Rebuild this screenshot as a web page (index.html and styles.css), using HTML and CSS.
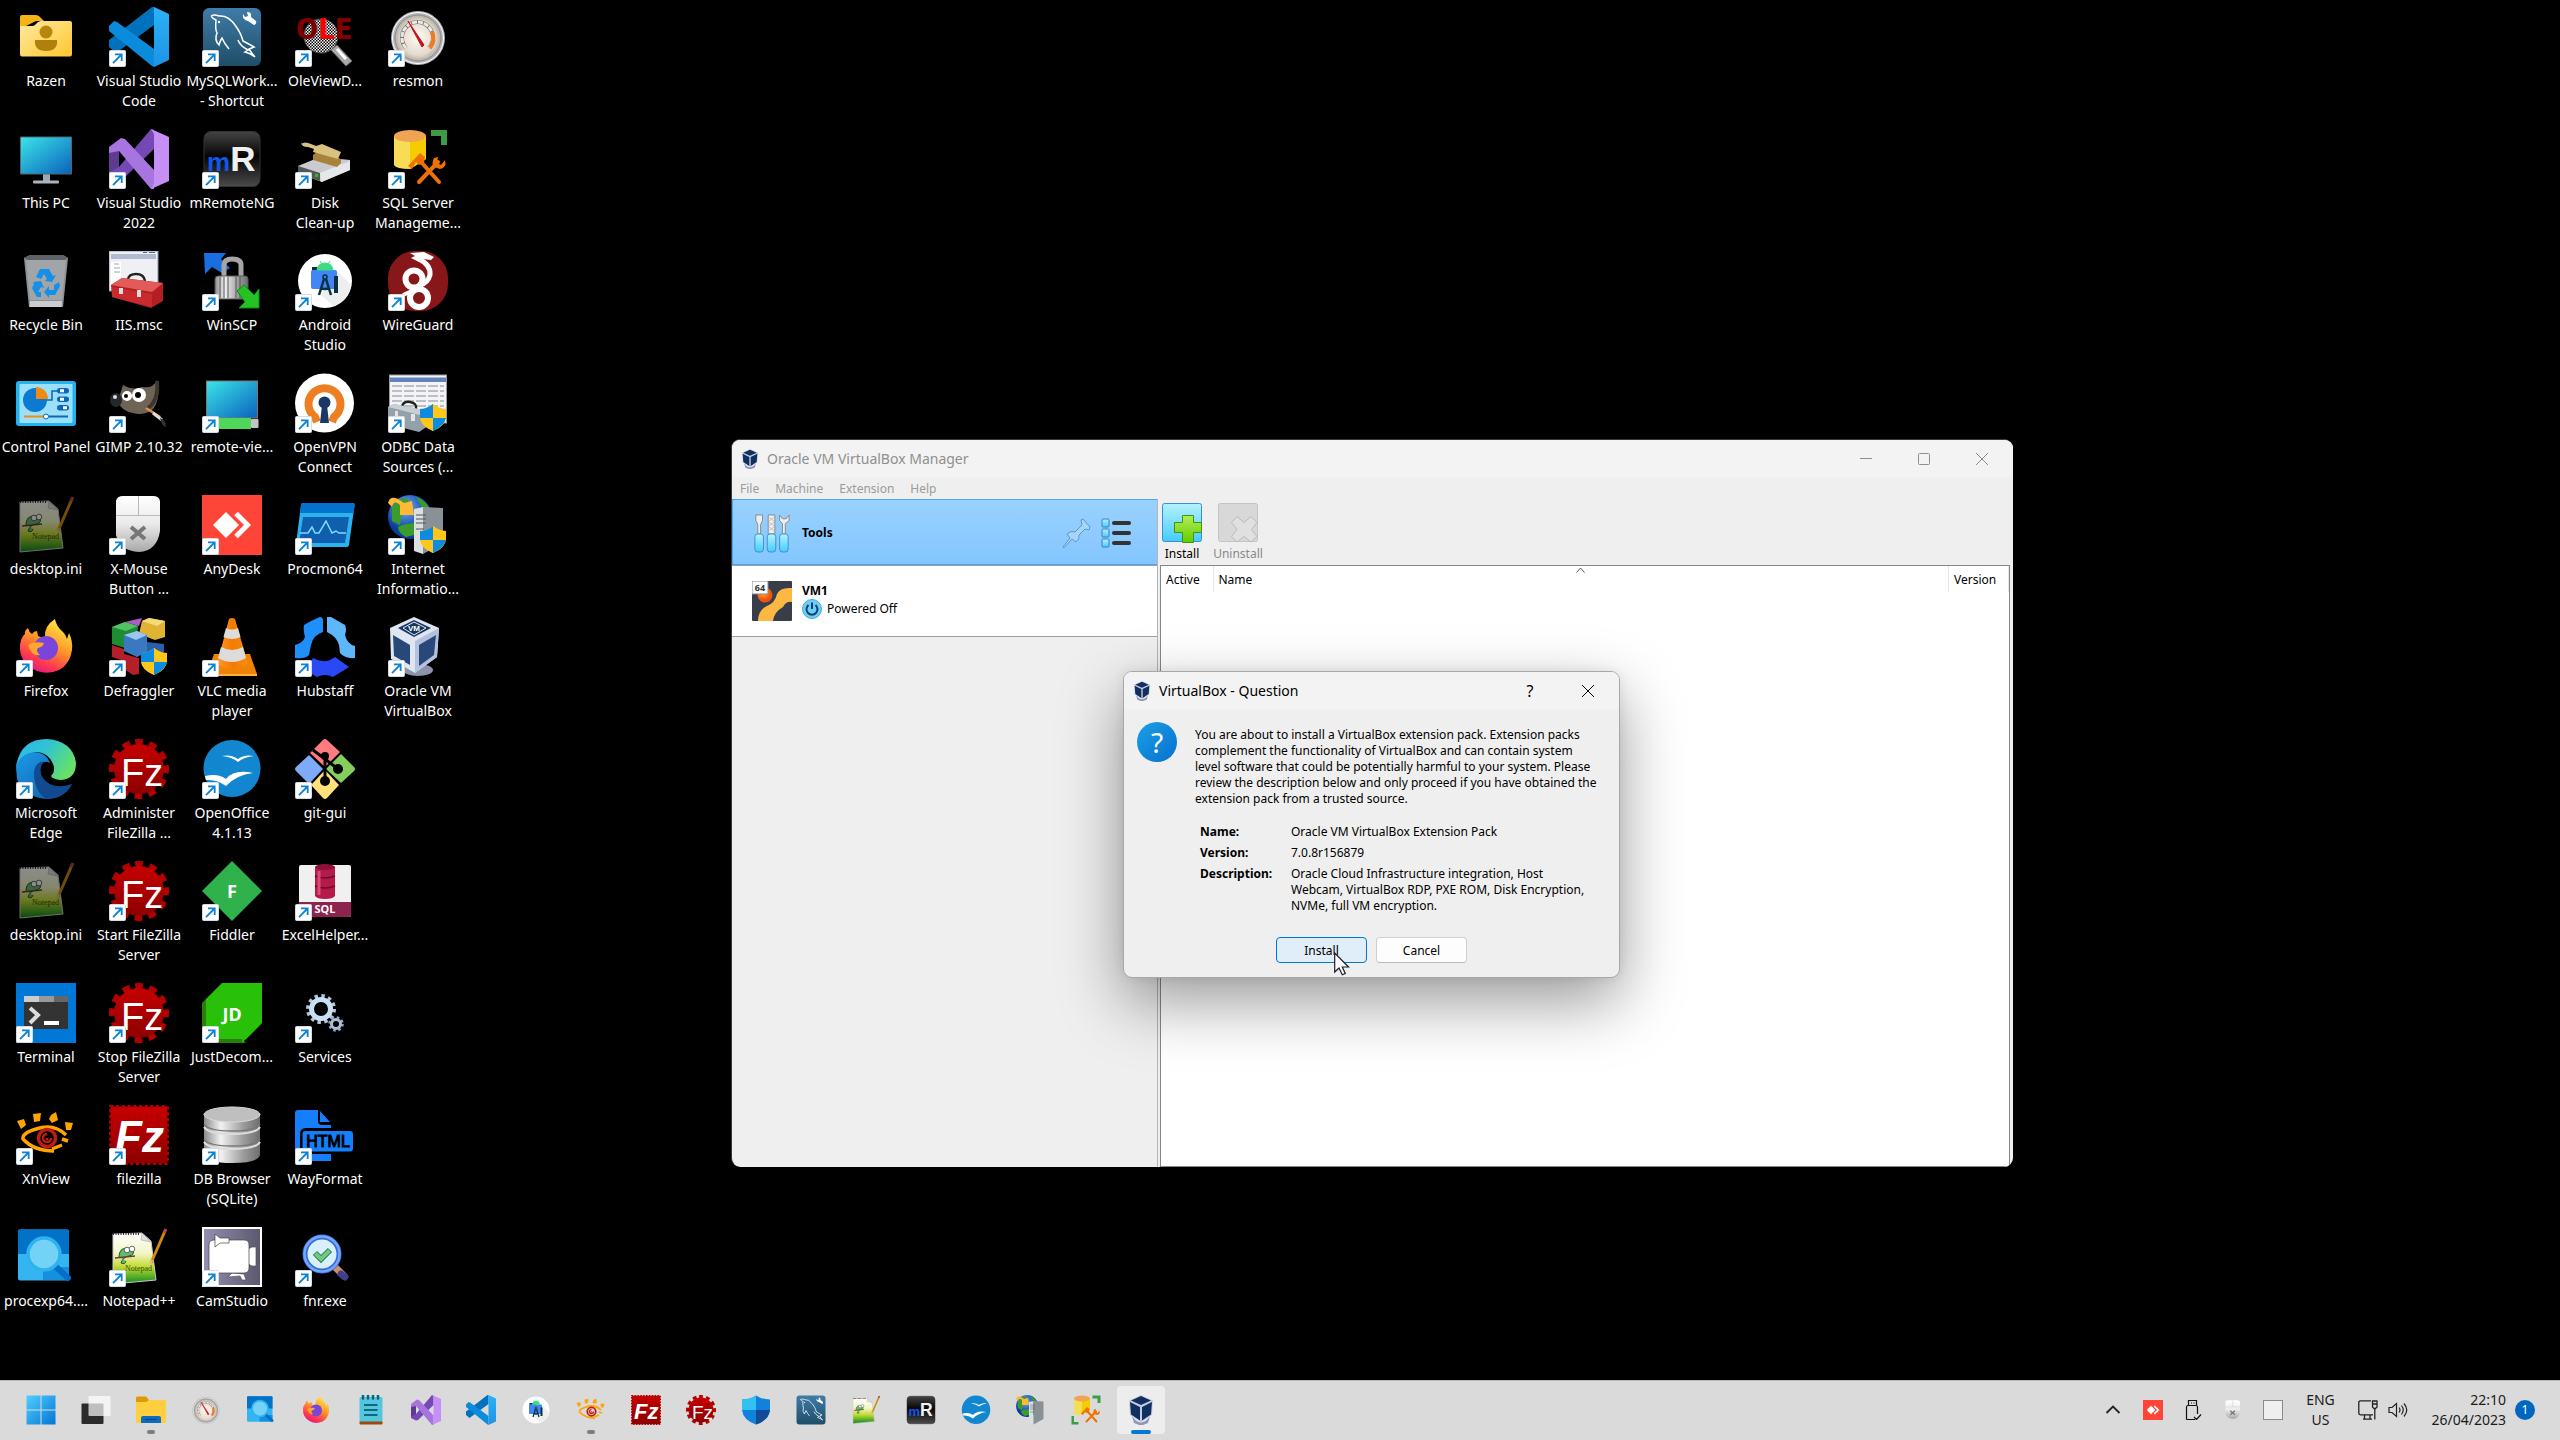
FILE: index.html
```html
<!DOCTYPE html>
<html lang="en">
<head>
  <meta charset="UTF-8">
  <meta name="viewport" content="width=device-width, initial-scale=1.0">
  <title>Desktop</title>

  <link rel="stylesheet" href="styles.css">

</head>
<body>

  <!-- icon sprite -->
  <svg class="sprite" aria-hidden="true">
    <defs>
      <linearGradient id="gYellow" x1="0" y1="0" x2="1" y2="1"><stop offset="0" stop-color="#ffe9a0"/><stop offset="1" stop-color="#ffc730"/></linearGradient>
      <linearGradient id="gBlue" x1="0" y1="0" x2="1" y2="1"><stop offset="0" stop-color="#3be3e8"/><stop offset="1" stop-color="#0a63bd"/></linearGradient>
      <linearGradient id="gCode" x1="0" y1="0" x2="0" y2="1"><stop offset="0" stop-color="#2bb2f6"/><stop offset="1" stop-color="#1e93e6"/></linearGradient>
      <linearGradient id="gMysql" x1="0" y1="0" x2="0" y2="1"><stop offset="0" stop-color="#3f7ca8"/><stop offset="1" stop-color="#1f4d68"/></linearGradient>
      <linearGradient id="gSteel" x1="0" y1="0" x2="1" y2="0"><stop offset="0" stop-color="#8c8c8c"/><stop offset=".3" stop-color="#f2f2f2"/><stop offset=".7" stop-color="#9c9c9c"/><stop offset="1" stop-color="#6e6e6e"/></linearGradient>
      <linearGradient id="gBlack" x1="0" y1="0" x2="0" y2="1"><stop offset="0" stop-color="#444"/><stop offset=".45" stop-color="#050505"/><stop offset="1" stop-color="#4a4a4a"/></linearGradient>
      <linearGradient id="gRed" x1="0" y1="0" x2="0" y2="1"><stop offset="0" stop-color="#c60000"/><stop offset="1" stop-color="#8d0000"/></linearGradient>
      <linearGradient id="gPaper" x1="0" y1="0" x2="0" y2="1"><stop offset="0" stop-color="#fff"/><stop offset=".4" stop-color="#f2f5c8"/><stop offset=".65" stop-color="#c4dd35"/><stop offset="1" stop-color="#0b8a1d"/></linearGradient>
      <linearGradient id="gFox" x1=".8" y1="0" x2=".3" y2="1"><stop offset="0" stop-color="#fff24a"/><stop offset=".45" stop-color="#ff9a27"/><stop offset=".8" stop-color="#ff3750"/><stop offset="1" stop-color="#e0158a"/></linearGradient>
      <linearGradient id="gEdgeTop" x1="0" y1="0" x2="1" y2=".5"><stop offset="0" stop-color="#2fb4f4"/><stop offset=".5" stop-color="#31c4cf"/><stop offset="1" stop-color="#66e06a"/></linearGradient>
      <linearGradient id="gEdge" x1="0" y1="0" x2="1" y2="1"><stop offset="0" stop-color="#1d9ae8"/><stop offset="1" stop-color="#0c59a4"/></linearGradient>
      <linearGradient id="gWin" x1="0" y1="0" x2="1" y2="1"><stop offset="0" stop-color="#4fd0ff"/><stop offset="1" stop-color="#0474d4"/></linearGradient>
      <linearGradient id="gCam" x1="0" y1="0" x2="1" y2="0"><stop offset="0" stop-color="#9490b4"/><stop offset="1" stop-color="#5a586c"/></linearGradient>
      <linearGradient id="gTool" x1="0" y1="0" x2="0" y2="1"><stop offset="0" stop-color="#b5f2ff"/><stop offset="1" stop-color="#45cbff"/></linearGradient>
      <linearGradient id="gPlus" x1="0" y1="0" x2="0" y2="1"><stop offset="0" stop-color="#b4ee55"/><stop offset="1" stop-color="#62cc00"/></linearGradient>
      <linearGradient id="gMouse" x1="0" y1="0" x2="0" y2="1"><stop offset="0" stop-color="#fff"/><stop offset=".5" stop-color="#eaeaea"/><stop offset="1" stop-color="#a8a8a8"/></linearGradient>
      <radialGradient id="gDial"><stop offset="0" stop-color="#fffaf2"/><stop offset=".75" stop-color="#e3dacd"/><stop offset="1" stop-color="#b5aca2"/></radialGradient>
      <radialGradient id="gSun" cx=".4" cy=".35"><stop offset="0" stop-color="#ffb04a"/><stop offset="1" stop-color="#ef5208"/></radialGradient>
      <radialGradient id="gGlobe" cx=".4" cy=".3"><stop offset="0" stop-color="#6fb4ff"/><stop offset="1" stop-color="#0b3c9c"/></radialGradient>
      <linearGradient id="gVlc" x1="0" y1="0" x2="1" y2="0"><stop offset="0" stop-color="#ff9a2c"/><stop offset=".5" stop-color="#f47a00"/><stop offset="1" stop-color="#f98d12"/></linearGradient>
      <pattern id="check" width="3" height="3" patternUnits="userSpaceOnUse"><rect width="3" height="3" fill="#fff"/><rect width="1.5" height="1.5"/><rect x="1.5" y="1.5" width="1.5" height="1.5"/></pattern>
    </defs>

    <symbol id="arrow" viewBox="0 0 17 17">
      <rect x=".5" y=".5" width="16" height="16" rx="1" fill="#fff" stroke="#d5dbe3"/>
      <path d="M4 13.200 L12.500 4.500 M6 4.300 H12.700 V11" fill="none" stroke="#0d83d8" stroke-width="1.800"/>
    </symbol>

    <symbol id="folder-user" viewBox="0 0 60 60">
      <path d="M4 10 Q4 8 6 8 H20 Q22 8 23.500 9.500 L28 14 H20 L4 22 Z" fill="#f5b315"/>
      <path d="M4 19 L16 19 Q18 19 19.500 17.500 L21.500 15.500 Q23 14 25 14 H54 Q56 14 56 16 V47 Q56 49.500 54 49.500 H6 Q4 49.500 4 47 Z" fill="url(#gYellow)"/>
      <circle cx="30" cy="25" r="6.500" fill="#b8860c"/>
      <path d="M19 33 H41 Q42 44 30 44 Q18 44 19 33Z" fill="#b0800c"/>
    </symbol>

    <symbol id="vscode" viewBox="0 0 60 60">
      <path d="M0 33 L8 27 L43 0 L45 0 V18 L7 46 L0 40 Z" fill="#0072bd"/>
      <path d="M0 19 L5 14 L8 15 L45 42 V60 L43 59 L0 24 Z" fill="#0b8bdc"/>
      <path d="M45 0 L60 7 V53 L45 60 Z" fill="url(#gCode)"/>
    </symbol>

    <symbol id="vs" viewBox="0 0 60 60">
      <path d="M0 18 L10 22 V42 L0 46 Z" fill="#5e3b8e"/>
      <path d="M0 43 L10 38 L42 0 L45 1 V20 L14 50 L10 51 L0 46Z" fill="#7549b3"/>
      <path d="M0 18 L12 9 L16 10 L45 41 V60 L42 60 L10 22 L0 24Z" fill="#a875e0"/>
      <path d="M42 0 L60 8 V52 L42 60 L45 55 V5Z" fill="#c68ff5"/>
    </symbol>

    <symbol id="mysql" viewBox="0 0 60 60">
      <rect x="1" y="1" width="58" height="58" rx="6" fill="url(#gMysql)"/>
      <path d="M9 9 Q12 7 17 9 Q26 8 33 18 Q39 26 41 34 Q47 37 52 40 L47 42 Q50 47 53 50 Q48 46 43 45 L46 43 Q38 39 36 33 M9 9 Q11 12 14 13 Q13 22 15 26 Q12 33 17 38 Q18 34 20 31 Q22 36 27 42" fill="none" stroke="#fff" stroke-width="1.500"/>
      <circle cx="17" cy="15" r="1.200" fill="#fff"/>
      <path d="M45 5 L46 9 L43 10 L41 7 Q40 13 46 14 L52 18 Q55 17 54 14 L49 10 Q50 5 45 5Z" fill="#fff"/>
    </symbol>

    <symbol id="ole" viewBox="0 0 60 60">
      <circle cx="26" cy="29" r="17" fill="url(#check)" stroke="#555"/>
      <path d="M36 43 l6 -5 15 16 -6 5z" fill="#aaa" stroke="#666"/><path d="M42 42 l9 10" stroke="#fff" stroke-width="3"/>
    </symbol>

    <symbol id="gauge" viewBox="0 0 60 60">
      <circle cx="30" cy="31" r="27" fill="#b4b4b8"/><circle cx="30" cy="31" r="25.500" fill="none" stroke="#fff"/>
      <circle cx="30" cy="31" r="23" fill="url(#gDial)" stroke="#8e8e92"/>
      <path d="M18 41 A15.500 15.500 0 1 1 41 41" fill="none" stroke="#777" stroke-width="4"/>
      <path d="M18 41 A15.500 15.500 0 1 1 41 41" fill="none" stroke="#efe8dd" stroke-width="3" stroke-dasharray="5 1"/>
      <path d="M44 25 A16 16 0 0 1 42 41" fill="none" stroke="#ef7b22" stroke-width="4"/>
      <path d="M20 14 L36 38 L34 40Z" fill="#d00f1c" stroke="#c00f1c"/>
    </symbol>

    <symbol id="pc" viewBox="0 0 60 60">
      <path d="M27 45 h7 v7 h-7z" fill="#9da8b2"/><rect x="17" y="51.500" width="26" height="3" rx="1" fill="#a8b4be"/>
      <rect x="4" y="7.500" width="52" height="38" rx="1" fill="#56656f"/>
      <rect x="5" y="8.500" width="50" height="36" fill="url(#gBlue)"/>
    </symbol>

    <symbol id="mremote" viewBox="0 0 60 60">
      <rect x="2" y="2.500" width="56" height="55" rx="7" fill="url(#gBlack)" stroke="#333"/>
    </symbol>

    <symbol id="disk" viewBox="0 0 60 60">
      <path d="M3 37 L25 28 L55 31 V41 L27 53 L3 44Z" fill="#c9cbd0"/><path d="M3 37 L25 44 V52 L3 44Z" fill="#555"/><path d="M25 44 L55 32 V41 L26 53Z" fill="#e6e7ea"/>
      <rect x="20" y="45" width="3" height="3" fill="#17c917"/>
      <path d="M18 26 L23 22 L46 30 V34 L42 38 L18 31Z" fill="#a8823a"/><path d="M6 15 q4 -3 10 0 l5 2 6 -2 19 8 -3 7 -25 -7 1 -3 -6 -2 q-7 0 -7 -5z" fill="#d9c280"/>
    </symbol>

    <symbol id="ssms" viewBox="0 0 60 60">
      <path d="M6 7 V36 Q8 40 22 40 L38 30 V7Z" fill="#f9dc56"/><path d="M22 10 H38 V30 L22 40Z" fill="#f5cc00"/>
      <ellipse cx="22" cy="7" rx="16" ry="6" fill="#eea452"/>
      <path d="M43 1 H59 V16 H53 V7 H43Z" fill="#3f9b46"/>
      <path d="M31 53 L50 33 M34 34 L51 53" stroke="#ee7203" stroke-width="4" stroke-linecap="round"/>
      <path d="M20 37 L32 24 L37 28 L36 34 L31 36 L28 33 L24 40Z M46 29 l4 -1 -1 6 4 2 4 -5 q2 8 -5 9 l-6 -2 q-3 -4 0 -9z" fill="#ee7203"/>
    </symbol>
    <symbol id="ssms-bar" viewBox="0 0 60 60">
      <use href="#ssms"/><path d="M1 42 H6 V54 H15 V59 H1Z" fill="#3f9b46"/>
    </symbol>

    <symbol id="recycle" viewBox="0 0 60 60">
      <path d="M8 7 L14 4 H47 L52 7 L47 56 H13Z" fill="#8e9194"/><path d="M8 7 L14 4 H47 L52 7 L49 9 H11Z" fill="#5d6266"/>
      <path d="M10 9 H50 L46 49 H14Z" fill="#a2a5a8"/><path d="M14 50 H46 L45.500 56 H13.500Z" fill="#c9ccd0"/>
      <path d="M24 18 h9 l4 7 3 -1 -4 7 -7 -1 2 -2 -3 -5 -3 5 -5 -2z M17 31 l8 -1 3 7 -3 -1 -3 5 h3 v5 h-4 l-5 -9 2 -4z M38 34 l5 -3 1 4 -5 9 h-6 v3 l-5 -6 5 -6 v4 h5z" fill="#1490e8"/>
    </symbol>

    <symbol id="toolbox" viewBox="0 0 60 60">
      <rect x="0" y="0" width="49" height="40" fill="#eef0f4" stroke="#8b93a2"/><rect x="2" y="3" width="45" height="5" fill="#aebbd0"/><path d="M34 1.500 h4 M40 1.500 h6" stroke="#556a92"/>
      <path d="M2 11 h10 v26 h-10z" fill="#fff"/><path d="M5 13 h5 M5 17 h6 M5 21 h6" stroke="#9aa"/>
      <path d="M19 28 Q20 23 27 23 Q35 23 36 30" fill="none" stroke="#222" stroke-width="2.500"/>
      <path d="M2 34 L13 27 L54 32 V50 L42 57 L3 46Z" fill="#b41f24"/><path d="M2 34 L13 27 L54 32 L43 41Z" fill="#e25b58"/><path d="M3 36 L43 43 V56 L3 46Z" fill="#c92a2d"/>
      <path d="M10 37 h4 v6 h-4z M28 39 h4 v7 h-4z" fill="#ddd"/>
    </symbol>

    <symbol id="winscp" viewBox="0 0 60 60">
      <path d="M2 2 L24 2 L19 8 L28 17 L20 22 L10 16 L3 23Z" fill="#1a6ee0"/>
      <path d="M22 28 V14 Q22 8 30 8 Q39 8 39 14 V28" fill="none" stroke="#a5a5a5" stroke-width="5"/>
      <rect x="13" y="25" width="33" height="23" rx="3" fill="url(#gSteel)" stroke="#555"/><path d="M18 26 v21 M22 26 v21 M26 26 v21 M34 26 v21 M38 26 v21" stroke="#555"/>
      <path d="M35 40 L42 34 L52 44 L57 38 V57 H37 L43 51Z" fill="#25c125" stroke="#0b8d13"/>
    </symbol>

    <symbol id="astudio" viewBox="0 0 60 60">
      <circle cx="30" cy="30" r="27" fill="#fff"/><path d="M42 20 L56 34 Q54 50 38 55 L26 44Z" fill="#eee"/>
      <path d="M17 16 h12 v6 h-12z" fill="#073042"/><rect x="16" y="19" width="26" height="19" rx="2" fill="#4285f4"/>
      <path d="M22 19 Q23 12 30 12 Q37 12 38 19Z M25 10 l2 3 M35 10 l-2 3" fill="#3ddc84" stroke="#3ddc84"/>
      <path d="M39 25 h4 v17 h-4z" fill="#073042"/><circle cx="30" cy="26" r="2" fill="none" stroke="#073042" stroke-width="1.500"/><path d="M29 28 L24 44 M31 28 L36 44 M25.500 37 Q30 39 34.500 37" fill="none" stroke="#073042" stroke-width="2.500"/>
    </symbol>

    <symbol id="wireguard" viewBox="0 0 60 60">
      <rect width="60" height="60" rx="27" fill="#88171a"/>
      <path d="M31 8 Q43 14 42 24 Q40 32 31 35" fill="none" stroke="#fff" stroke-width="5"/>
      <path d="M22 2 L36 1 L46 6 L43 9 L35 8 L31 11 L23 7 L27 5Z" fill="#fff"/>
      <circle cx="26" cy="28" r="8.500" fill="none" stroke="#fff" stroke-width="6"/><circle cx="31" cy="47" r="9" fill="none" stroke="#fff" stroke-width="6"/>
      <path d="M15 44 L24 40" stroke="#fff" stroke-width="4"/>
    </symbol>

    <symbol id="cpanel" viewBox="0 0 60 60">
      <rect x="0" y="8" width="60" height="45" rx="3" fill="#24b2ee"/><rect x="3.500" y="11" width="53" height="39" rx="1" fill="#9be0fa"/>
      <circle cx="19" cy="27" r="12" fill="#0d7ad0"/><path d="M20 14 A12 12 0 0 1 32 26 H20Z" fill="#f08a12"/>
      <path d="M31 27 H36 V18 H43" fill="none" stroke="#0d66b4" stroke-width="1.500"/>
      <rect x="41" y="15" width="12" height="5.500" rx="2.750" fill="#0d66b4"/><rect x="41" y="23.500" width="12" height="5.500" rx="2.750" fill="#0d66b4"/><rect x="41" y="32" width="12" height="5.500" rx="2.750" fill="#0d66b4"/>
      <path d="M44 17.700 h4 M44 26.200 h4 M47 34.700 h4" stroke="#fff" stroke-width="3"/>
      <path d="M8 43.500 H30" stroke="#f08a12" stroke-width="2"/><path d="M30 43.500 H52" stroke="#0d66b4" stroke-width="2"/><circle cx="30" cy="43.500" r="2.500" fill="#fff" stroke="#0d66b4"/>
    </symbol>

    <symbol id="gimp" viewBox="0 0 60 60">
      <path d="M14 12 Q24 18 33 14 Q44 16 48 7 Q52 26 44 36 Q36 43 24 40 Q12 38 9 28Z" fill="#6e6455"/><path d="M48 8 Q50 28 38 36" fill="none" stroke="#3d372e" stroke-width="4"/>
      <ellipse cx="7" cy="27" rx="6" ry="7" fill="#25282b"/><circle cx="6" cy="24" r="2" fill="#ddd"/>
      <circle cx="18" cy="23" r="5" fill="#fff"/><circle cx="30" cy="22" r="7" fill="#fff"/><circle cx="17" cy="23" r="2"/><circle cx="29" cy="22" r="3"/>
      <path d="M37 35 L51 44" stroke="#e2914a" stroke-width="2.500"/><path d="M44 40 L53 47" stroke="#ddd" stroke-width="3"/><path d="M51 45 Q57 47 57 54 Q52 52 51 45Z" fill="#333"/>
    </symbol>

    <symbol id="remote" viewBox="0 0 60 60">
      <rect x="4" y="7.500" width="52" height="38" fill="#777"/><rect x="5" y="8.500" width="50" height="36" fill="url(#gBlue)"/>
      <rect x="6" y="45" width="43" height="11" fill="#4fd65b"/><rect x="49" y="46" width="7.500" height="9" rx="1" fill="#c4c4c4"/>
    </symbol>

    <symbol id="openvpn" viewBox="0 0 60 60">
      <circle cx="29.500" cy="30" r="29.500" fill="#fff"/>
      <path d="M22 49 L20 44 A16 16 0 1 1 39 44 L37 49" fill="none" stroke="#ed7f22" stroke-width="8"/>
      <circle cx="29.500" cy="29.500" r="6" fill="#1a3867"/><path d="M27 32 h5 l2 18 h-9z" fill="#1a3867"/>
    </symbol>

    <symbol id="shield" viewBox="0 0 60 60">
      <path d="M45 31 Q39 36 32 36 V43 Q32 53 45 58 Q58 53 58 43 V36 Q51 36 45 31Z" fill="#ffc61c"/>
      <path d="M45 31 V45 H58 V36 Q51 36 45 31Z M32 45 H45 V58 Q34 53 32 45Z" fill="#ffc61c"/>
      <path d="M45 31 Q39 36 32 36 V45 H45Z M45 45 H58 Q56 53 45 58Z" fill="#0c8be0"/>
    </symbol>

    <symbol id="odbc" viewBox="0 0 60 60">
      <rect x="1.500" y="2" width="57" height="48" fill="#f4f4f6" stroke="#999"/><rect x="2" y="4.500" width="56" height="4.500" fill="#6283be"/>
      <path d="M4 13 h52 M4 18 h52 M4 23 h52 M4 28 h52 M4 33 h52 M4 38 h52" stroke="#a9adb5" stroke-width="1.500" stroke-dasharray="10 2"/>
      <path d="M14 34 Q15 28 22 29 Q29 30 28 36" fill="none" stroke="#222" stroke-width="2.500"/>
      <path d="M0 34 L6 31 L40 38 V53 L31 59 L0 51Z" fill="#93a1aa"/><path d="M0 34 L6 31 L40 38 L32 42Z" fill="#c7d0d5"/><path d="M23 41 h4 v7 h-4z M7 38 h3 v5 h-3z" fill="#e4e4e4"/>
      <use href="#shield"/>
    </symbol>

    <symbol id="npp" viewBox="0 0 60 60">
      <path d="M4 7 L33 6 L42 14 L47 53 L4 57Z" fill="url(#gPaper)" stroke="#c8c8c8"/><path d="M33 6 L32 13 L42 15Z" fill="#ddd" stroke="#999" stroke-width=".5"/>
      <path d="M4 7 H31" stroke="#333" stroke-width="2" stroke-dasharray="1 1.500"/>
      <path d="M10 30 Q10 21 18 21 L24 23 Q26 28 20 29 Q14 30 12 36 Q16 38 17 34" fill="#66bb6a" stroke="#24542a"/>
      <path d="M6 31 L26 29" stroke="#6b3d3a" stroke-width="1.500"/><circle cx="18" cy="23" r="2.800" fill="#fff" stroke="#333" stroke-width=".7"/><circle cx="23" cy="22" r="2.800" fill="#fff" stroke="#333" stroke-width=".7"/>
      <path d="M56 4 L42 36" stroke="#d08a10" stroke-width="3"/><path d="M57 2 L55 6" stroke="#b3464a" stroke-width="3"/><path d="M43 33 L41 38" stroke="#e6c08a" stroke-width="2"/>
    </symbol>

    <symbol id="xmouse" viewBox="0 0 60 60">
      <path d="M7 6 Q8 1 14 1 H44 Q50 1 51 6 V36 Q48 56 30 57 Q11 56 7 40Z" fill="url(#gMouse)"/>
      <path d="M7 20.500 H51 M29.500 1 V20" stroke="#b9b9b9"/>
      <path d="M22 32 L36 44 M36 32 L22 44" stroke="#777" stroke-width="4"/>
    </symbol>

    <symbol id="anydesk" viewBox="0 0 60 60">
      <rect width="60" height="60" fill="#ff4438"/><path d="M11 30 L24 17 L37 30 L24 43Z" fill="#fff"/><path d="M34 18.500 L45.500 30 L34 41.500" fill="none" stroke="#fff" stroke-width="5"/>
    </symbol>

    <symbol id="procmon" viewBox="0 0 60 60">
      <path d="M8 8 H58 Q60 8 59.500 11 L54 50 Q53.500 52 52 52 H3 Q0 52 1 49 L6 10 Q6.500 8 8 8Z" fill="#2cb2ee"/>
      <path d="M8 8 H58 Q60 8 59.500 11 L58.500 18 H5 L6 10 Q6.500 8 8 8Z" fill="#0273cf"/><path d="M8 22 H54 L50 48 H4Z" fill="#0f5fae"/>
      <path d="M5 38 H13 L17 32 L20 38 L24 38 L31 26 L37 38 L41 36 L44 38 H51" fill="none" stroke="#79dcff" stroke-width="1.500"/>
    </symbol>

    <symbol id="server" viewBox="0 0 60 60">
      <circle cx="22" cy="22" r="22" fill="url(#gGlobe)"/>
      <path d="M4 12 Q10 2 20 4 L22 14 L14 20 L12 30 L4 26Z M28 2 Q40 6 42 16 L34 12Z M14 30 L26 28 L26 40 L18 42 Q10 38 10 32Z" fill="#3c9c2a"/>
      <path d="M0 8 Q2 0 10 4 L16 8 L24 6 L26 20 L12 20 L12 10 Q6 4 4 12Z" fill="#ffb932"/>
      <path d="M26 14 L35 12 V59 L26 56Z" fill="#dcdfe2"/><path d="M35 12 L55 13 V48 L35 59Z" fill="#8a9196"/><path d="M28 20 h10 M28 24 h10 M28 28 h10 M28 34 h8" stroke="#555"/>
    </symbol>
    <symbol id="iis" viewBox="0 0 60 60"><use href="#server"/><use href="#shield"/></symbol>

    <symbol id="firefox" viewBox="0 0 60 60">
      <path d="M4 28 Q5 20 9 17 Q8 14 12 11 Q13 15 16 17 Q18 14 21 14 L22 19 Q26 21 29 20 Q28 9 39 2 Q40 9 47 15 Q50 18 51 22 L53 16 Q57 24 56 33 Q54 47 43 53 Q30 59 17 52 Q3 44 4 28Z" fill="url(#gFox)"/>
      <circle cx="30" cy="31" r="12" fill="#7a45d8"/><path d="M12 28 Q18 24 28 26 Q27 30 22 31 Q19 34 24 38 Q16 40 12 28Z" fill="#ffa62e"/>
    </symbol>

    <symbol id="defrag" viewBox="0 0 60 60">
      <path d="M3 10 L16 5 L29 9 L28 19 L16 31 L3 27Z" fill="#1d8c33"/><path d="M3 10 L16 5 L29 9 L17 14Z" fill="#52c263"/>
      <path d="M16 5 L33 1 L30 9Z" fill="#b05cc8"/>
      <path d="M33 4 L40 1 L56 4 V20 L46 23 L30 17Z" fill="#e0b432"/><path d="M33 4 L40 1 L56 4 L48 9Z" fill="#f5da78"/>
      <path d="M3 28 L15 32 V44 L3 40Z M15 37 L30 41 V57 L24 58 L12 50Z" fill="#b3202a"/><path d="M38 25 L55 27 V35 H38Z" fill="#2a5fae"/>
      <path d="M15 18 L28 14 L38 18 V35 L28 40 L15 34Z" fill="#3b78c2"/><path d="M15 18 L28 14 L38 18 L27 23Z" fill="#9bc6ee"/>
      <use href="#shield"/>
    </symbol>

    <symbol id="vlc" viewBox="0 0 60 60">
      <path d="M12 37 H48 L55 57 V59 H5 V57Z" fill="#f08205"/><path d="M5 57 H55 V59 H5Z" fill="#ffb03a"/>
      <path d="M27 2 Q30 0 33 2 L46 47 Q30 56 15 47Z" fill="url(#gVlc)"/>
      <path d="M24 11 Q30 14 36 11 L38.500 20 Q30 24 21.500 20Z M19 30 Q30 36 41 30 L44 41 Q30 49 16 41Z" fill="#dcdcdc"/>
    </symbol>

    <symbol id="hubstaff" viewBox="0 0 60 60">
      <path d="M16 4 L25 0 Q28 0 28 4 V15 Q18 18 16 28 L14 38 Q10 42 0 41 V28 Q8 26 10 20 Q8 12 9 8Z" fill="#1f90fa"/>
      <path d="M32 0 L36 0 L50 8 Q52 12 50 18 Q52 27 60 29 V41 Q50 42 45 36 L44 28 Q42 20 32 15Z" fill="#5eb6fb"/>
      <path d="M18 41 Q30 48 40 40 L54 50 L38 60 Q30 56 22 60 L8 52 Q14 48 18 41Z" fill="#2a49f5"/>
    </symbol>

    <symbol id="vbox" viewBox="0 0 60 60">
      <ellipse cx="30" cy="53" rx="15" ry="6" fill="#8d93ad"/>
      <path d="M26 0 L51 11 L49 40 L27 56 L3 42 L2 11Z" fill="#dfe6f2"/><path d="M27 24 L51 11 L49 40 L27 56Z" fill="#b4c2dd"/>
      <path d="M26 3 L43 11 L26 20 L10 11Z" fill="#183560"/><path d="M5 18 L22 28 V48 L6 39Z" fill="#274878"/><path d="M31 28 L48 18 L46 38 L31 49Z" fill="#274878"/>
      <path d="M26 5 L38 11 L26 18 L15 11Z" fill="none" stroke="#dfe6f2"/>
    </symbol>

    <symbol id="cube" viewBox="0 0 60 60">
      <path d="M12 42 Q30 68 48 42 L44 56 L34 60 H26 L16 56Z" fill="#9199b8"/>
      <path d="M30 0 L54 11 L52 40 L30 55 L8 40 L6 11Z" fill="#c3cde2"/>
      <path d="M30 2 L50 11 L30 20 L10 11Z M8 14 L28 24 V51 L10 39Z M52 14 L32 24 V51 L50 39Z" fill="#12305f"/>
    </symbol>

    <symbol id="edge" viewBox="0 0 60 60">
      <path d="M0 28 Q2 14 14 13 Q30 12 34 24 Q26 20 24 30 Q24 40 34 46 Q45 52 56 45 Q48 60 30 60 Q8 58 1 40Z" fill="url(#gEdge)"/>
      <path d="M18 34 Q18 24 28 22 Q22 30 26 38 Q36 52 56 45 Q48 60 30 60 Q18 52 18 34Z" fill="#114a8f"/>
      <path d="M0 28 Q4 0 31 0 Q57 2 60 24 Q60 40 45 41 Q36 40 35 37 Q40 32 37 25 Q32 13 19 13 Q4 14 0 28Z" fill="url(#gEdgeTop)"/>
    </symbol>

    <symbol id="fzserver" viewBox="0 0 60 60">
      <circle cx="30" cy="30" r="26.500" fill="none" stroke="#b30000" stroke-width="7" stroke-dasharray="7.500 6.375" transform="rotate(-98 30 30)"/>
      <circle cx="30" cy="30" r="25" fill="url(#gRed)"/>
    </symbol>

    <symbol id="ooffice" viewBox="0 0 60 60">
      <circle cx="30" cy="29.500" r="28.500" fill="#1287d0"/>
      <path d="M20 17 Q29 15 36 20 Q42 15 52 17 Q42 18 36 23 Q30 18 20 17Z M3 37 Q16 34 24 40 Q32 30 51 34 Q34 36 24 47 Q15 40 4 41Z" fill="#fff"/>
    </symbol>

    <symbol id="gitgui" viewBox="0 0 60 60">
      <path d="M28 1 Q30 -1 32 1 L45 13 L30 28 L15 14Z" fill="#ff7b80"/><path d="M46 15 L59 28 Q61 30 59 32 L46 44 L31 30Z" fill="#85cf5f"/>
      <path d="M14 16 L28 30 L14 45 L1 32 Q-1 30 1 28Z" fill="#7eaaf8"/><path d="M30 31 L44 46 L32 59 Q30 61 28 59 L16 46Z" fill="#ffe07a"/>
      <path d="M18 11 L30 20 V42 M30 20 L43 30" fill="none" stroke="#000" stroke-width="3"/><circle cx="30" cy="17" r="4"/><circle cx="30" cy="42" r="5"/><circle cx="43" cy="30" r="5"/>
    </symbol>

    <symbol id="fiddler" viewBox="0 0 60 60"><path d="M30 0 L60 30 L30 60 L0 30Z" fill="#2fb24c"/></symbol>

    <symbol id="excel" viewBox="0 0 60 60">
      <rect x="4" y="4" width="52" height="52" rx="2" fill="#f0f0f0"/><path d="M4 41 H56 V54 Q56 56 54 56 H4Z" fill="#8e2350"/>
      <path d="M20 6 H40 V35 Q38 38 30 38 Q22 38 20 35Z" fill="#b51a4b"/><ellipse cx="30" cy="6" rx="10" ry="3" fill="#8f1038"/><path d="M20 15 Q30 19 40 15 M20 25 Q30 29 40 25" fill="none" stroke="#6e0a2b" stroke-width="1.500"/>
      <path d="M24 10 V34" stroke="#dc4a78" stroke-width="3"/>
    </symbol>

    <symbol id="terminal" viewBox="0 0 60 60">
      <rect width="60" height="60" fill="#0078d7"/><rect x="8" y="13" width="44" height="33" rx="1" fill="#333"/>
      <path d="M8 13 H23 V19 H8Z" fill="#ccc"/><path d="M23 13 H38 V19 H23Z" fill="#999"/><path d="M38 13 H52 V19 H38Z" fill="#666"/>
      <path d="M14 25 L22 32 L14 40" fill="none" stroke="#ddd" stroke-width="4"/><path d="M28 40 H43" stroke="#fff" stroke-width="4"/>
    </symbol>

    <symbol id="jd" viewBox="0 0 60 60">
      <path d="M0 20 L4 16 V56 H40 L44 60 H0Z" fill="#2a7d0b"/><path d="M20 0 H60 V40 L44 56 H4 V16Z" fill="#28c008"/><path d="M60 40 L40 60 V56Z" fill="#28c008"/>
    </symbol>

    <symbol id="services" viewBox="0 0 60 60">
      <circle cx="26" cy="26" r="13" fill="none" stroke="#b4c9dd" stroke-width="4" stroke-dasharray="3.400 3.400"/><circle cx="26" cy="26" r="9.500" fill="none" stroke="#c9e0f2" stroke-width="5"/>
      <circle cx="41" cy="41" r="6.500" fill="none" stroke="#8fa5bd" stroke-width="2.500" stroke-dasharray="2.500 2.600"/><circle cx="41" cy="41" r="4.500" fill="none" stroke="#a9bfd6" stroke-width="3"/>
    </symbol>

    <symbol id="xnview" viewBox="0 0 60 60">
      <path d="M1 16 L8 14 L10 20 L5 24Z M17 9 L25 8 L24 16 L18 17Z M35 10 L40 7 L42 15 L36 18 L33 14Z M49 17 L57 18 L55 25 L50 25Z" fill="#ffa400"/>
      <path d="M50 30 Q38 18 20 24 Q6 28 7 34 Q18 46 38 46 M36 44 L46 40 M46 34 L52 36" fill="none" stroke="#ffa400" stroke-width="3.500"/>
      <circle cx="31" cy="33" r="8.500" fill="none" stroke="#c01d12" stroke-width="3.500"/><path d="M31 29 a4 4 0 1 0 4 4 M31 33 v2" fill="none" stroke="#c01d12" stroke-width="2.500"/>
    </symbol>

    <symbol id="filezilla" viewBox="0 0 60 60">
      <rect x="1.500" y="1.500" width="57" height="57" fill="url(#gRed)" stroke="#b30000" stroke-width="3" stroke-dasharray="3 2.700"/><rect x="2" y="2" width="56" height="56" fill="url(#gRed)"/>
    </symbol>

    <symbol id="dbbrowser" viewBox="0 0 60 60">
      <path d="M2 9 V50 Q4 58 30 58 Q56 58 58 50 V9Z" fill="url(#gSteel)"/><ellipse cx="30" cy="9.500" rx="28" ry="7.500" fill="#bfbfbf" stroke="#d8d8d8"/>
      <path d="M2 19 Q6 26 30 26 Q54 26 58 19 M2 34 Q6 41 30 41 Q54 41 58 34" fill="none" stroke="#777" stroke-width="1.500"/>
      <path d="M2 22 Q6 29 30 29 Q54 29 58 22 M2 37 Q6 44 30 44 Q54 44 58 37" fill="none" stroke="#ddd" stroke-width="2"/>
    </symbol>

    <symbol id="wayformat" viewBox="0 0 60 60">
      <path d="M3 5 H23 V16 Q23 20 27 20 H36 V56 H3 Q0 56 0 53 V8 Q0 5 3 5Z M25 6 L35 17 H25Z" fill="#147efb"/>
      <path d="M5 49 V29 Q5 23 11 23 H56 Q60 23 60 28 V44 Q60 49 55 49Z" fill="#000"/><rect x="7.500" y="26" width="50.500" height="20.500" rx="3" fill="#147efb"/>
    </symbol>

    <symbol id="procexp" viewBox="0 0 60 60">
      <rect x="2" y="2.500" width="51" height="51" rx="2" fill="#34b4f0"/><path d="M2 27 V4.500 Q2 2.500 4 2.500 H51 Q53 2.500 53 4.500 V27Z" fill="#0272c9"/><path d="M27 40 H53 V53 H27Z" fill="#1590dd"/>
      <path d="M38 38 L52 51" stroke="#036fc8" stroke-width="6" stroke-linecap="round"/><circle cx="28" cy="27" r="16" fill="#74d2f7" stroke="#2fb2ee" stroke-width="3.500"/>
    </symbol>

    <symbol id="camstudio" viewBox="0 0 60 60">
      <rect x="1" y="1" width="58" height="58" fill="url(#gCam)" stroke="#fff" stroke-width="2"/>
      <path d="M46 22 L50 20 H54 V39 H50 L46 37Z M30 46 L42 47 L44 53 H40 L38 49 L26 50Z" fill="#fff" stroke="#555" stroke-width=".7"/>
      <path d="M12 13 H42 Q47 13 47 18 V41 Q47 46 42 46 H12 Q7 46 7 41 V18 Q7 13 12 13Z" fill="#fff" stroke="#444" stroke-width=".7"/>
      <path d="M13 7 L18 11 H27 V16 H18 L13 20Z" fill="#fff" stroke="#444" stroke-width=".7"/>
    </symbol>

    <symbol id="fnr" viewBox="0 0 60 60">
      <path d="M39 39 L50 50" stroke="#c99164" stroke-width="7"/><path d="M46 47 L50 50" stroke="#3d3f8c" stroke-width="7" stroke-linecap="round"/>
      <circle cx="27" cy="27" r="17" fill="#d8f0fb" stroke="#3d6bd6" stroke-width="5"/><circle cx="27" cy="27" r="17.500" fill="none" stroke="#6fa8ff" stroke-width="2.500"/>
      <path d="M20 26 L26 32 L35 23" fill="none" stroke="#2c7a50" stroke-width="6"/><path d="M20.500 26.500 L26 32 L34.500 23.500" fill="none" stroke="#6ecb80" stroke-width="4"/>
    </symbol>

    <symbol id="start" viewBox="0 0 60 60"><path d="M1 1 H29 V29 H1Z M31 1 H59 V29 H31Z M1 31 H29 V59 H1Z M31 31 H59 V59 H31Z" fill="url(#gWin)"/></symbol>
    <symbol id="taskview" viewBox="0 0 60 60"><rect x="1" y="17" width="44" height="41" rx="2" fill="#2b2b2b"/><rect x="15" y="2" width="44" height="40" rx="2" fill="#fff" opacity=".7"/></symbol>
    <symbol id="explorer" viewBox="0 0 60 60"><path d="M0 6 Q0 3 3 3 H20 L26 10 H57 V20 H0Z" fill="#dc9b08"/><path d="M0 14 H20 L26 10 H57 Q60 10 60 13 V56 H0Z" fill="#ffcf40"/><path d="M10 56 V46 Q10 42 14 42 H46 Q50 42 50 46 V56Z" fill="#0f6cbd"/><path d="M18 49 H42" stroke="#094a86" stroke-width="2.500"/></symbol>
    <symbol id="notepad" viewBox="0 0 60 60"><rect x="7" y="52" width="46" height="7" rx="2" fill="#9a4a0b"/><rect x="7" y="4" width="46" height="49" rx="3" fill="#54c5dc"/><path d="M16 20 H43 M16 30 H43 M16 40 H43" stroke="#096a80" stroke-width="4"/><path d="M14 1 v6 M24 1 v6 M34 1 v6 M44 1 v6" stroke="#0b6378" stroke-width="5" stroke-linecap="round"/></symbol>
    <symbol id="defender" viewBox="0 0 60 60"><path d="M30 1 Q18 9 2 9 V30 Q4 50 30 59 Q56 50 58 30 V9 Q42 9 30 1Z" fill="#1182dc"/><path d="M30 1 Q18 9 2 9 V30 H30Z" fill="#35c0f2"/><path d="M30 30 H58 Q56 50 30 59Z" fill="#124a98"/></symbol>

    <!-- VirtualBox manager icons -->
    <symbol id="tools" viewBox="0 0 40 42">
      <path d="M3 2 H10 V8 L8 12 V22 H5 V12 L3 8Z M16 2 H23 V22 H16Z M28 2 L28 8 L31 11 V22 H34 V11 L38 8 V2 L35 6 H31Z" fill="#eee" stroke="#888"/>
      <path d="M16 4 L23 9 M16 9 L23 14 M16 14 L23 19 M23 4 L16 9 M23 9 L16 14 M23 14 L16 19" stroke="#aaa" stroke-width=".6"/>
      <rect x="2" y="22" width="9" height="19" rx="3" fill="url(#gTool)" stroke="#3a8fc9"/><rect x="15" y="22" width="9" height="19" rx="3" fill="url(#gTool)" stroke="#3a8fc9"/><rect x="28" y="22" width="9" height="19" rx="3" fill="url(#gTool)" stroke="#3a8fc9"/>
    </symbol>
    <symbol id="pin" viewBox="0 0 30 30"><path d="M2 29 L9 20 L6 16 Q10 12 14 14 L21 7 L20 2 L22 1 L29 9 L28 12 L24 11 L18 17 Q19 21 15 24 L11 21 L3 30Z" fill="#a6d5fb" stroke="#5f95c8"/></symbol>
    <symbol id="list" viewBox="0 0 30 30"><g fill="url(#gTool)" stroke="#3a7ebd"><rect x="1" y="1" width="7" height="8" rx="1"/><rect x="1" y="11" width="7" height="8" rx="1"/><rect x="1" y="21" width="7" height="8" rx="1"/></g><path d="M13 5 H28 M13 15 H28 M13 25 H28" stroke="#333" stroke-width="4" stroke-linecap="round"/></symbol>
    <symbol id="vm" viewBox="0 0 40 40">
      <rect width="40" height="40" rx="1" fill="#393d49"/><circle cx="13" cy="14" r="7.500" fill="url(#gSun)"/>
      <path d="M6 40 Q6 29 15 25 Q23 22 25 13 Q28 6 40 7 V21 Q34 20 31 26 Q22 31 21 40Z" fill="#fdb843"/>
      <rect width="16" height="13" fill="#fff" stroke="#888"/>
    </symbol>
    <symbol id="power" viewBox="0 0 20 20"><circle cx="10" cy="10" r="9.500" fill="#6ad0f8" stroke="#48a6dc"/><path d="M10 3.500 V10 M6.500 6 A5.500 5.500 0 1 0 13.500 6" fill="none" stroke="#134069" stroke-width="2"/></symbol>
    <symbol id="install" viewBox="0 0 40 40"><rect x=".5" y=".5" width="39" height="38" rx="2" fill="url(#gTool)" stroke="#3391dd"/><path d="M20.500 12.500 H31.500 V19.500 H39.500 V29.500 H31.500 V39.500 H20.500 V29.500 H12.500 V19.500 H20.500Z" fill="url(#gPlus)" stroke="#3f9510"/></symbol>
    <symbol id="uninstall" viewBox="0 0 40 40"><rect x=".5" y=".5" width="39" height="38" rx="2" fill="#d8d8d8" stroke="#c4c4c4"/><path d="M19 13.500 L26 19.500 L33 13.500 L39 19.500 L33.500 26.500 L39 33.500 L33 39 L26 33.500 L19 39 L13.500 33.500 L19 26.500 L13.500 19.500Z" fill="#e0e0e0" stroke="#bbb"/></symbol>
  </svg>

  <main class="desktop">
    <ul class="shortcuts">
      <li><a href="#"><span class="pic"><svg><use href="#folder-user"/></svg></span>Razen</a></li>
      <li><a href="#"><span class="pic"><svg><use href="#pc"/></svg></span>This PC</a></li>
      <li><a href="#"><span class="pic"><svg><use href="#recycle"/></svg></span>Recycle Bin</a></li>
      <li><a href="#"><span class="pic"><svg><use href="#cpanel"/></svg></span>Control Panel</a></li>
      <li><a href="#"><span class="pic hidden-file"><svg viewBox="0 0 60 60"><use href="#npp"/><text class="npp-text" x="16" y="44">Notepad</text></svg></span>desktop.ini</a></li>
      <li><a href="#"><span class="pic"><svg><use href="#firefox"/></svg><svg class="link"><use href="#arrow"/></svg></span>Firefox</a></li>
      <li><a href="#"><span class="pic"><svg><use href="#edge"/></svg><svg class="link"><use href="#arrow"/></svg></span>Microsoft<br>Edge</a></li>
      <li><a href="#"><span class="pic hidden-file"><svg viewBox="0 0 60 60"><use href="#npp"/><text class="npp-text" x="16" y="44">Notepad</text></svg></span>desktop.ini</a></li>
      <li><a href="#"><span class="pic"><svg><use href="#terminal"/></svg><svg class="link"><use href="#arrow"/></svg></span>Terminal</a></li>
      <li><a href="#"><span class="pic"><svg><use href="#xnview"/></svg><svg class="link"><use href="#arrow"/></svg></span>XnView</a></li>
      <li><a href="#"><span class="pic"><svg><use href="#procexp"/></svg></span>procexp64....</a></li>

      <li><a href="#"><span class="pic"><svg><use href="#vscode"/></svg><svg class="link"><use href="#arrow"/></svg></span>Visual Studio<br>Code</a></li>
      <li><a href="#"><span class="pic"><svg><use href="#vs"/></svg><svg class="link"><use href="#arrow"/></svg></span>Visual Studio<br>2022</a></li>
      <li><a href="#"><span class="pic"><svg><use href="#toolbox"/></svg></span>IIS.msc</a></li>
      <li><a href="#"><span class="pic"><svg><use href="#gimp"/></svg><svg class="link"><use href="#arrow"/></svg></span>GIMP 2.10.32</a></li>
      <li><a href="#"><span class="pic"><svg><use href="#xmouse"/></svg><svg class="link"><use href="#arrow"/></svg></span>X-Mouse<br>Button ...</a></li>
      <li><a href="#"><span class="pic"><svg><use href="#defrag"/></svg><svg class="link"><use href="#arrow"/></svg></span>Defraggler</a></li>
      <li><a href="#"><span class="pic"><svg viewBox="0 0 60 60"><use href="#fzserver"/><text class="fz-text" x="12" y="47">Fz</text></svg><svg class="link"><use href="#arrow"/></svg></span>Administer<br>FileZilla ...</a></li>
      <li><a href="#"><span class="pic"><svg viewBox="0 0 60 60"><use href="#fzserver"/><text class="fz-text" x="12" y="47">Fz</text></svg><svg class="link"><use href="#arrow"/></svg></span>Start FileZilla<br>Server</a></li>
      <li><a href="#"><span class="pic"><svg viewBox="0 0 60 60"><use href="#fzserver"/><text class="fz-text" x="12" y="47">Fz</text></svg><svg class="link"><use href="#arrow"/></svg></span>Stop FileZilla<br>Server</a></li>
      <li><a href="#"><span class="pic"><svg viewBox="0 0 60 60"><use href="#filezilla"/><text class="fz-bold" x="6" y="47">Fz</text></svg><svg class="link"><use href="#arrow"/></svg></span>filezilla</a></li>
      <li><a href="#"><span class="pic"><svg viewBox="0 0 60 60"><use href="#npp"/><text class="npp-text" x="16" y="44">Notepad</text></svg><svg class="link"><use href="#arrow"/></svg></span>Notepad++</a></li>

      <li><a href="#"><span class="pic"><svg><use href="#mysql"/></svg><svg class="link"><use href="#arrow"/></svg></span>MySQLWork...<br>- Shortcut</a></li>
      <li><a href="#"><span class="pic"><svg viewBox="0 0 60 60"><use href="#mremote"/><text class="mr-text" x="5" y="42"><tspan class="m">m</tspan>R</text></svg><svg class="link"><use href="#arrow"/></svg></span>mRemoteNG</a></li>
      <li><a href="#"><span class="pic"><svg><use href="#winscp"/></svg><svg class="link"><use href="#arrow"/></svg></span>WinSCP</a></li>
      <li><a href="#"><span class="pic"><svg><use href="#remote"/></svg><svg class="link"><use href="#arrow"/></svg></span>remote-vie...</a></li>
      <li><a href="#"><span class="pic"><svg><use href="#anydesk"/></svg><svg class="link"><use href="#arrow"/></svg></span>AnyDesk</a></li>
      <li><a href="#"><span class="pic"><svg><use href="#vlc"/></svg><svg class="link"><use href="#arrow"/></svg></span>VLC media<br>player</a></li>
      <li><a href="#"><span class="pic"><svg><use href="#ooffice"/></svg><svg class="link"><use href="#arrow"/></svg></span>OpenOffice<br>4.1.13</a></li>
      <li><a href="#"><span class="pic"><svg viewBox="0 0 60 60"><use href="#fiddler"/><text class="logo-text" x="30" y="37">F</text></svg><svg class="link"><use href="#arrow"/></svg></span>Fiddler</a></li>
      <li><a href="#"><span class="pic"><svg viewBox="0 0 60 60"><use href="#jd"/><text class="logo-text" x="30" y="38">JD</text></svg><svg class="link"><use href="#arrow"/></svg></span>JustDecom...</a></li>
      <li><a href="#"><span class="pic"><svg><use href="#dbbrowser"/></svg><svg class="link"><use href="#arrow"/></svg></span>DB Browser<br>(SQLite)</a></li>
      <li><a href="#"><span class="pic"><svg><use href="#camstudio"/></svg><svg class="link"><use href="#arrow"/></svg></span>CamStudio</a></li>

      <li><a href="#"><span class="pic"><svg viewBox="0 0 60 60"><use href="#ole"/><text class="ole-text" x="1" y="32">O<tspan class="l">L</tspan>E</text></svg><svg class="link"><use href="#arrow"/></svg></span>OleViewD...</a></li>
      <li><a href="#"><span class="pic"><svg><use href="#disk"/></svg><svg class="link"><use href="#arrow"/></svg></span>Disk<br>Clean-up</a></li>
      <li><a href="#"><span class="pic"><svg><use href="#astudio"/></svg><svg class="link"><use href="#arrow"/></svg></span>Android<br>Studio</a></li>
      <li><a href="#"><span class="pic"><svg><use href="#openvpn"/></svg><svg class="link"><use href="#arrow"/></svg></span>OpenVPN<br>Connect</a></li>
      <li><a href="#"><span class="pic"><svg><use href="#procmon"/></svg><svg class="link"><use href="#arrow"/></svg></span>Procmon64</a></li>
      <li><a href="#"><span class="pic"><svg><use href="#hubstaff"/></svg><svg class="link"><use href="#arrow"/></svg></span>Hubstaff</a></li>
      <li><a href="#"><span class="pic"><svg><use href="#gitgui"/></svg><svg class="link"><use href="#arrow"/></svg></span>git-gui</a></li>
      <li><a href="#"><span class="pic"><svg viewBox="0 0 60 60"><use href="#excel"/><text class="logo-text small" x="30" y="52">SQL</text></svg><svg class="link"><use href="#arrow"/></svg></span>ExcelHelper...</a></li>
      <li><a href="#"><span class="pic"><svg><use href="#services"/></svg><svg class="link"><use href="#arrow"/></svg></span>Services</a></li>
      <li><a href="#"><span class="pic"><svg viewBox="0 0 60 60"><use href="#wayformat"/><text class="html-text" x="33" y="42">HTML</text></svg><svg class="link"><use href="#arrow"/></svg></span>WayFormat</a></li>
      <li><a href="#"><span class="pic"><svg><use href="#fnr"/></svg><svg class="link"><use href="#arrow"/></svg></span>fnr.exe</a></li>

      <li><a href="#"><span class="pic"><svg><use href="#gauge"/></svg><svg class="link"><use href="#arrow"/></svg></span>resmon</a></li>
      <li><a href="#"><span class="pic"><svg><use href="#ssms"/></svg><svg class="link"><use href="#arrow"/></svg></span>SQL Server<br>Manageme...</a></li>
      <li><a href="#"><span class="pic"><svg><use href="#wireguard"/></svg><svg class="link"><use href="#arrow"/></svg></span>WireGuard</a></li>
      <li><a href="#"><span class="pic"><svg><use href="#odbc"/></svg><svg class="link"><use href="#arrow"/></svg></span>ODBC Data<br>Sources (...</a></li>
      <li><a href="#"><span class="pic"><svg><use href="#iis"/></svg><svg class="link"><use href="#arrow"/></svg></span>Internet<br>Informatio...</a></li>
      <li><a href="#"><span class="pic"><svg viewBox="0 0 60 60"><use href="#vbox"/><text class="vm-text" x="20" y="14">VM</text></svg><svg class="link"><use href="#arrow"/></svg></span>Oracle VM<br>VirtualBox</a></li>
    </ul>

    <section class="window manager">
      <header class="titlebar">
        <svg class="app-icon"><use href="#cube"/></svg>
        <h1>Oracle VM VirtualBox Manager</h1>
        <button class="caption" aria-label="Minimize"><svg viewBox="0 0 12 12"><path d="M0 5.500 H12"/></svg></button>
        <button class="caption" aria-label="Maximize"><svg viewBox="0 0 12 12"><rect x=".5" y=".5" width="11" height="11" rx="1"/></svg></button>
        <button class="caption" aria-label="Close"><svg viewBox="0 0 12 12"><path d="M0 0 L12 12 M12 0 L0 12"/></svg></button>
      </header>
      <nav class="menubar">
        <button>File</button>
        <button>Machine</button>
        <button>Extension</button>
        <button>Help</button>
      </nav>
      <div class="panes">
        <aside class="machines">
          <div class="tools-row">
            <svg class="tools-icon"><use href="#tools"/></svg>
            <b>Tools</b>
            <button class="mini" aria-label="Pin"><svg><use href="#pin"/></svg></button>
            <button class="mini" aria-label="Tool list"><svg><use href="#list"/></svg></button>
          </div>
          <div class="vm-row">
            <svg class="vm-icon" viewBox="0 0 40 40"><use href="#vm"/><text class="bits" x="8" y="10">64</text></svg>
            <div class="vm-info">
              <b>VM1</b>
              <span class="state"><svg><use href="#power"/></svg>Powered Off</span>
            </div>
          </div>
        </aside>
        <div class="extensions">
          <div class="toolbar">
            <button><svg><use href="#install"/></svg>Install</button>
            <button disabled><svg><use href="#uninstall"/></svg>Uninstall</button>
          </div>
          <div class="list">
            <table>
              <thead>
                <tr>
                  <th class="col-active">Active</th>
                  <th class="col-name">Name<svg class="sort" viewBox="0 0 9 6"><path d="M.5 5.500 L4.500 1 L8.500 5.500"/></svg></th>
                  <th class="col-version">Version</th>
                </tr>
              </thead>
            </table>
          </div>
        </div>
      </div>
    </section>

    <section class="window dialog" role="dialog" aria-labelledby="dialog-title">
      <header class="titlebar">
        <svg class="app-icon"><use href="#cube"/></svg>
        <h2 id="dialog-title">VirtualBox - Question</h2>
        <button class="caption help" aria-label="Help">?</button>
        <button class="caption" aria-label="Close"><svg viewBox="0 0 12 12"><path d="M0 0 L12 12 M12 0 L0 12"/></svg></button>
      </header>
      <div class="message">
        <span class="question">?</span>
        <div class="text">
          <p>You are about to install a VirtualBox extension pack. Extension packs<br>
            complement the functionality of VirtualBox and can contain system<br>
            level software that could be potentially harmful to your system. Please<br>
            review the description below and only proceed if you have obtained the<br>
            extension pack from a trusted source.</p>
          <dl>
            <dt>Name:</dt><dd>Oracle VM VirtualBox Extension Pack</dd>
            <dt>Version:</dt><dd>7.0.8r156879</dd>
            <dt>Description:</dt><dd>Oracle Cloud Infrastructure integration, Host<br>Webcam, VirtualBox RDP, PXE ROM, Disk Encryption,<br>NVMe, full VM encryption.</dd>
          </dl>
        </div>
      </div>
      <footer class="actions">
        <button class="primary">Install<svg class="pointer" viewBox="0 0 16 24"><path d="M.7 1 V20 L5 16 L8.300 22.800 L11.300 21.500 L8.300 15 H14.500Z" fill="#fff" stroke="#1b1b2b" stroke-width="1.200"/></svg></button>
        <button>Cancel</button>
      </footer>
    </section>
  </main>

  <footer class="taskbar">
    <nav class="apps">
      <button aria-label="Start"><svg><use href="#start"/></svg></button>
      <button aria-label="Task view"><svg><use href="#taskview"/></svg></button>
      <button class="open" aria-label="File Explorer"><svg><use href="#explorer"/></svg></button>
      <button aria-label="Resource Monitor"><svg><use href="#gauge"/></svg></button>
      <button aria-label="Process Explorer"><svg><use href="#procexp"/></svg></button>
      <button aria-label="Firefox"><svg><use href="#firefox"/></svg></button>
      <button aria-label="Notepad"><svg><use href="#notepad"/></svg></button>
      <button aria-label="Visual Studio"><svg><use href="#vs"/></svg></button>
      <button aria-label="Visual Studio Code"><svg><use href="#vscode"/></svg></button>
      <button aria-label="Android Studio"><svg><use href="#astudio"/></svg></button>
      <button class="open" aria-label="XnView"><svg><use href="#xnview"/></svg></button>
      <button aria-label="FileZilla"><svg viewBox="0 0 60 60"><use href="#filezilla"/><text class="fz-bold" x="6" y="47">Fz</text></svg></button>
      <button aria-label="FileZilla Server"><svg viewBox="0 0 60 60"><use href="#fzserver"/><text class="fz-text" x="12" y="47">Fz</text></svg></button>
      <button aria-label="Windows Security"><svg><use href="#defender"/></svg></button>
      <button aria-label="MySQL Workbench"><svg><use href="#mysql"/></svg></button>
      <button aria-label="Notepad++"><svg><use href="#npp"/></svg></button>
      <button aria-label="mRemoteNG"><svg viewBox="0 0 60 60"><use href="#mremote"/><text class="mr-text" x="5" y="42"><tspan class="m">m</tspan>R</text></svg></button>
      <button aria-label="OpenOffice"><svg><use href="#ooffice"/></svg></button>
      <button aria-label="IIS Manager"><svg><use href="#server"/></svg></button>
      <button aria-label="SQL Server Management Studio"><svg><use href="#ssms-bar"/></svg></button>
      <button class="active" aria-label="VirtualBox"><svg><use href="#cube"/></svg></button>
    </nav>
    <div class="tray">
      <button aria-label="Show hidden icons"><svg viewBox="0 0 20 20"><path d="M3.500 13 L10 6.500 L16.500 13" fill="none" stroke="#222" stroke-width="1.800"/></svg></button>
      <button aria-label="AnyDesk"><svg><use href="#anydesk"/></svg></button>
      <button aria-label="Safely remove hardware"><svg viewBox="0 0 20 20"><path d="M5.500 5 V.5 H13.500 V5 M3.500 19.500 V7 Q3.500 5.500 5 5.500 H13 Q14.500 5.500 14.500 7 V14 M3.500 19.500 H12 M11 17 L13.500 19.500 L18 14.500 M8 3 h1 M10.500 3 h1" fill="none" stroke="#111" stroke-width="1.200"/></svg></button>
      <button aria-label="X-Mouse"><svg><use href="#xmouse"/></svg></button>
      <button aria-label="Tablet"><svg viewBox="0 0 20 20"><rect x=".5" y=".5" width="19" height="19" fill="#efefef" stroke="#8b8b8b"/></svg></button>
      <button class="lang">ENG<br>US</button>
      <button class="net" aria-label="Network and volume">
        <svg viewBox="0 0 20 20"><path d="M13 .8 H2.500 Q.8 .8 .8 2.500 V13 Q.8 14.800 2.500 14.800 H15 M5 19.200 H14 M6.500 15 V19 M12 15 V19 M14.500 1 H19 V7 L17.500 8.500 H16 L14.500 7Z M16.800 8.500 V19.500 M14.500 4 H19" fill="none" stroke="#222" stroke-width="1.300"/></svg>
        <svg viewBox="0 0 20 20"><path d="M1 7.500 H4 L8.500 3.500 V16.500 L4 12.500 H1Z M11 7.500 Q13 10 11 12.500 M13.500 5.500 Q17 10 13.500 14.500 M16 3.500 Q21.500 10 16 16.500" fill="none" stroke="#222" stroke-width="1.200"/></svg>
      </button>
      <button class="clock">22:10<br>26/04/2023</button>
      <button class="badge">1</button>
    </div>
  </footer>

</body>
</html>
```
FILE: styles.css
```css
* {
  box-sizing: border-box;
}
body {
  margin: 0;
  height: 100vh;
  display: flex;
  flex-direction: column;
  background-color: #000;
  color: #000;
  font-family: "Noto Sans", "Open Sans", sans-serif;
  font-size: 12px;
  line-height: 16px;
  overflow: hidden;
}
button {
  font: inherit;
  color: inherit;
  border: none;
  background: none;
  padding: 0;
}
h1, h2, p, ul, dl, dd {
  margin: 0;
  padding: 0;
}
svg {
  display: block;
}
.sprite {
  position: absolute;
  width: 0;
  height: 0;
}

/* text inside the logos */
.ole-text {
  font: bold 29px "DejaVu Sans Condensed", sans-serif;
  fill: #820000;
}
.ole-text .l {
  fill: #f00;
}
.mr-text {
  font: bold 35px "Liberation Sans", sans-serif;
  fill: #f0f0f0;
}
.mr-text .m {
  font-size: 26px;
  fill: #1256e8;
}
.npp-text {
  font: 8px "Liberation Serif", serif;
  fill: #3c4f12;
}
.vm-text {
  font: bold 8px "Liberation Sans", sans-serif;
  fill: #fff;
}
.fz-text {
  font: 38px "Liberation Sans", sans-serif;
  fill: #fff;
}
.fz-bold {
  font: italic bold 44px "Liberation Sans", sans-serif;
  fill: #fff;
}
.logo-text {
  font: bold 18px "Noto Sans", sans-serif;
  fill: #fff;
  text-anchor: middle;
}
.small {
  font-size: 11px;
}
.html-text {
  font: 16px "Liberation Sans", sans-serif;
  fill: #000;
  stroke: #000;
  text-anchor: middle;
}
.bits {
  font: bold 9px "Noto Sans", sans-serif;
  fill: #333;
  text-anchor: middle;
}

/* desktop */
.desktop {
  flex: 1;
  position: relative;
  min-height: 0;
}
.shortcuts {
  height: 100%;
  list-style: none;
  display: grid;
  grid-auto-flow: column;
  grid-template-rows: repeat(auto-fill, 122px);
  grid-auto-columns: 93px;
  justify-content: start;
}
.shortcuts a {
  display: block;
  padding: 7px 1px 0 0;
  color: #fff;
  font-size: 14px;
  line-height: 20px;
  text-align: center;
  text-decoration: none;
  white-space: nowrap;
}
.pic {
  display: block;
  position: relative;
  width: 60px;
  height: 60px;
  margin: 0 auto 4px;
}
.pic svg {
  width: 60px;
  height: 60px;
}
.pic .link {
  position: absolute;
  left: 0;
  bottom: 0;
  width: 17px;
  height: 17px;
}
.hidden-file {
  opacity: .55;
}

/* windows */
.window {
  position: absolute;
  display: flex;
  flex-direction: column;
  background-color: #efefef;
  border-radius: 9px;
  overflow: hidden;
}
.manager {
  left: 731px;
  top: 439px;
  width: calc(50vw + 2px);
  height: 728px;
  border: 1px solid #3a3a3a;
  border-width: 1px 0 0 1px;
}
.titlebar {
  height: 37px;
  display: flex;
  align-items: center;
  padding: 0 2px 0 8px;
  background-color: #f3f3f3;
}
.titlebar h1, .titlebar h2 {
  flex: 1;
  font-size: 14px;
  font-weight: normal;
}
.manager .titlebar {
  color: #8f8f8f;
}
.app-icon {
  width: 20px;
  height: 20px;
  margin-right: 7px;
}
.caption {
  width: 58px;
  height: 37px;
  display: flex;
  align-items: center;
  justify-content: center;
}
.caption svg {
  width: 12px;
  height: 12px;
  fill: none;
  stroke: currentColor;
  overflow: visible;
}
.menubar {
  height: 22px;
  display: flex;
  align-items: center;
  gap: 16px;
  padding: 2px 0 0 8px;
  color: #9b9b9b;
}
.panes {
  flex: 1;
  display: flex;
  min-height: 0;
}
.machines {
  width: 426px;
  border-right: 1px solid #b4b4b4;
}
.tools-row {
  height: 66px;
  display: flex;
  align-items: center;
  gap: 10px;
  padding: 1px 26px 0 20px;
  background: linear-gradient(#99d1ff, #83c6ff);
  border: 1px solid #47a6f5;
  border-right: none;
}
.tools-row b {
  flex: 1;
  padding-left: 1px;
}
.tools-icon {
  width: 38px;
  height: 42px;
}
.mini svg {
  width: 30px;
  height: 30px;
}
.vm-row {
  height: 72px;
  display: flex;
  align-items: center;
  gap: 10px;
  padding-left: 20px;
  background-color: #fff;
  border-top: 1px solid #a0a0a0;
  border-bottom: 1px solid #a0a0a0;
}
.vm-icon {
  width: 40px;
  height: 40px;
}
.state {
  display: flex;
  align-items: center;
  gap: 5px;
}
.state svg {
  width: 20px;
  height: 20px;
}
.extensions {
  flex: 1;
  display: flex;
  flex-direction: column;
  padding: 0 3px 0 2px;
}
.toolbar {
  height: 66px;
  display: flex;
  align-items: center;
}
.toolbar button {
  width: 44px;
  display: flex;
  flex-direction: column;
  align-items: center;
  gap: 3px;
}
.toolbar button:disabled {
  width: 68px;
  color: #8a8a8a;
}
.toolbar svg {
  width: 40px;
  height: 40px;
}
.list {
  flex: 1;
  background-color: #fff;
  border: 1px solid #828790;
}
table {
  width: 100%;
  border-collapse: collapse;
  table-layout: fixed;
}
th {
  position: relative;
  height: 26px;
  padding: 1px 0 0 5px;
  font-weight: normal;
  text-align: left;
  border-right: 1px solid #e5e5e5;
}
.col-active {
  width: 52px;
}
.col-version {
  width: 60px;
}
.sort {
  position: absolute;
  left: 50%;
  top: 1px;
  width: 9px;
  height: 6px;
  margin-left: -5px;
  fill: none;
  stroke: #555;
}

/* question dialog */
.dialog {
  left: 1123px;
  top: 671px;
  border: 1px solid #a8a8a8;
  width: 497px;
  box-shadow: 0 24px 64px rgba(0, 0, 0, .4), 0 0 12px rgba(0, 0, 0, .08);
}
.help {
  font-size: 16px;
}
.message {
  display: flex;
  padding: 13px 12px 0 13px;
}
.question {
  width: 40px;
  height: 40px;
  border-radius: 50%;
  background: linear-gradient(135deg, #1ba0e6, #0670cf);
  color: #fff;
  font-size: 28px;
  line-height: 40px;
  text-align: center;
}
.text {
  padding: 5px 0 0 18px;
  white-space: nowrap;
}
dl {
  display: grid;
  grid-template-columns: 91px auto;
  row-gap: 5px;
  padding: 17px 0 0 5px;
}
dt {
  font-weight: bold;
}
.actions {
  display: flex;
  justify-content: center;
  gap: 9px;
  padding: 23px 0 14px;
}
.actions button {
  position: relative;
  width: 91px;
  height: 26px;
  padding-top: 1px;
  background-color: #fdfdfd;
  border: 1px solid #d0d0d0;
  border-bottom-color: #bababa;
  border-radius: 4px;
}
.actions .primary {
  background-color: #e0eef9;
  border-color: #0078d4;
}
.pointer {
  position: absolute;
  left: 57px;
  top: 14px;
  width: 16px;
  height: 24px;
}

/* taskbar */
.taskbar {
  height: 60px;
  display: flex;
  justify-content: space-between;
  padding-bottom: 1px;
  background-color: #dadada;
  border-top: 1px solid #bcb8b6;
}
.apps {
  display: flex;
  align-items: center;
  gap: 7px;
  padding-left: 17px;
}
.apps button {
  position: relative;
  width: 48px;
  height: 48px;
  border-radius: 4px;
}
.apps svg {
  width: 30px;
  height: 30px;
  margin: 0 auto;
}
.open::after, .active::after {
  content: "";
  position: absolute;
  left: 20px;
  bottom: 0;
  width: 8px;
  height: 4px;
  border-radius: 2px;
  background-color: #7d7d7d;
}
.apps .active {
  background-color: #ededed;
}
.apps .active::after {
  left: 14px;
  width: 20px;
  background-color: #0078d4;
}
.tray {
  display: flex;
  align-items: center;
  gap: 20px;
  padding-right: 25px;
  color: #1c1c1c;
  font-size: 14px;
  line-height: 20px;
}
.tray svg {
  width: 20px;
  height: 20px;
}
.lang {
  width: 35px;
}
.net {
  display: flex;
  gap: 10px;
}
.clock {
  width: 78px;
  text-align: right;
}
.tray .badge {
  width: 20px;
  height: 20px;
  margin-left: -11px;
  border-radius: 50%;
  background-color: #0067c0;
  color: #fff;
  font-size: 12px;
}
```
